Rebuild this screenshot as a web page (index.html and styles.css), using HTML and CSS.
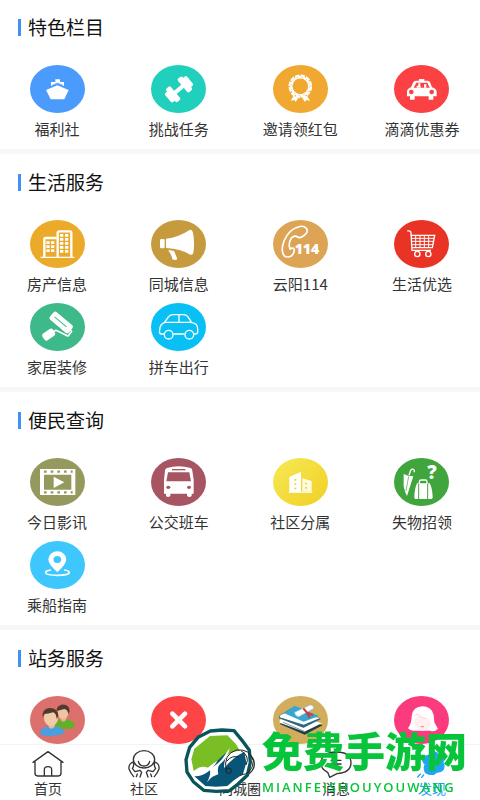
FILE: index.html
```html
<!DOCTYPE html>
<html lang="zh-CN">
<head>
    <meta charset="UTF-8">
    <title>发现</title>
    <meta name="viewport" content="width=device-width, initial-scale=1.0">
    <link rel="stylesheet" href="styles.css">
</head>
<body>
    <main class="page">
        <section class="section">
            <h2 class="section-title">特色栏目</h2>
            <div class="grid">
                <a class="item" href="#">
                    <svg class="icon" viewBox="0 0 165 144">
                        <ellipse cx="82.5" cy="72" rx="82.5" ry="72" fill="#4a9bfb"/>
                        <path fill="#fff" d="M48 75 82 61 116 75 103 103H62zM63 63V51H76V43H90V51H102V63L82 55z"/>
                        <path d="M66 61 82 54 99 61" fill="none" stroke="#4a9bfb" stroke-width="2"/>
                    </svg>
                    <span>福利社</span>
                </a>
                <a class="item" href="#">
                    <svg class="icon" viewBox="0 0 165 144">
                        <ellipse cx="82.5" cy="72" rx="82.5" ry="72" fill="#20d0bd"/>
                        <g fill="#fff" transform="translate(84 73) rotate(-40)">
                            <rect x="-22" y="-6" width="44" height="12"/>
                            <rect x="-32" y="-26" width="18" height="52" rx="5"/>
                            <rect x="-43" y="-18" width="18" height="36" rx="5"/>
                            <rect x="14" y="-26" width="18" height="52" rx="5"/>
                            <rect x="25" y="-18" width="18" height="36" rx="5"/>
                        </g>
                    </svg>
                    <span>挑战任务</span>
                </a>
                <a class="item" href="#">
                    <svg class="icon" viewBox="0 0 165 144">
                        <ellipse cx="82.5" cy="72" rx="82.5" ry="72" fill="#f0a830"/>
                        <circle cx="82" cy="64" r="27" fill="none" stroke="#fff" stroke-width="7"/>
                        <circle cx="82" cy="64" r="31" fill="none" stroke="#fff" stroke-width="9" stroke-dasharray="13 3.2"/>
                        <circle cx="82" cy="64" r="28" fill="none" stroke="#f0a830" stroke-width="2" stroke-dasharray="4 11"/>
                        <path fill="#fff" d="M62 92 76 99 68 111 64 105 53 107zM102 92 88 99 96 111 100 105 111 107z"/>
                    </svg>
                    <span>邀请领红包</span>
                </a>
                <a class="item" href="#">
                    <svg class="icon" viewBox="0 0 165 144">
                        <ellipse cx="82.5" cy="72" rx="82.5" ry="72" fill="#fb4143"/>
                        <path fill="#fff" fill-rule="evenodd" d="M75 42H91V47H101Q106 47 108 52L114 67Q127 71 128 80V94H118V104H104V94H62V104H48V94H39V79Q40 71 51 67L58 52Q60 47 66 47H75zM67 53 59 68H107L100 53z"/>
                        <path fill="#fff" d="M73 55H79V68H73zM68 62H80V68H68zM90 58H97V68H90z"/>
                        <circle cx="52" cy="81" r="7" fill="#fb4143"/><circle cx="113" cy="81" r="7" fill="#fb4143"/>
                    </svg>
                    <span>滴滴优惠券</span>
                </a>
            </div>
        </section>

        <section class="section">
            <h2 class="section-title">生活服务</h2>
            <div class="grid">
                <a class="item" href="#">
                    <svg class="icon" viewBox="0 0 165 144">
                        <ellipse cx="82.5" cy="72" rx="82.5" ry="72" fill="#ecaa2a"/>
                        <path fill="none" stroke="#fff" stroke-width="7" d="M43 112V57Q43 54 46 54H79M83 112V39Q83 34 88 34H119Q124 34 124 39V112"/>
                        <path fill="none" stroke="#fff" stroke-width="4" d="M32 112H133"/>
                        <path fill="none" stroke="#fff" stroke-width="10" stroke-dasharray="8 4" d="M54 64V100M68 64V100M95 42V101M110 42V101"/>
                    </svg>
                    <span>房产信息</span>
                </a>
                <a class="item" href="#">
                    <svg class="icon" viewBox="0 0 165 144">
                        <ellipse cx="82.5" cy="72" rx="82.5" ry="72" fill="#c69b3d"/>
                        <rect x="27" y="57" width="14" height="28" rx="4" fill="#fff"/>
                        <path fill="#fff" d="M45 56Q82 52 117 29Q124 28 126 38Q132 69 127 99Q125 106 118 104Q88 86 45 84zM53 90 69 93 78 114Q80 121 71 120L64 118Q62 104 53 93z"/>
                    </svg>
                    <span>同城信息</span>
                </a>
                <a class="item" href="#">
                    <svg class="icon" viewBox="0 0 165 144">
                        <ellipse cx="82.5" cy="72" rx="82.5" ry="72" fill="#dea455"/>
                        <path fill="none" stroke="#fff" stroke-width="5" stroke-linejoin="round" d="M75 21Q47 29 33 63Q22 94 34 108Q44 114 55 108Q65 99 64 88Q61 81 51 87Q45 70 55 54Q64 45 74 51Q82 57 97 43Q107 34 100 25Q91 15 75 21z"/>
                        <text class="icon-number" x="65" y="101">114</text>
                    </svg>
                    <span>云阳114</span>
                </a>
                <a class="item" href="#">
                    <svg class="icon" viewBox="0 0 165 144">
                        <ellipse cx="82.5" cy="72" rx="82.5" ry="72" fill="#e93425"/>
                        <g fill="none" stroke="#fff" stroke-width="4">
                            <path d="M40 33Q50 31 51 39L54 91H111M51 46H122L115 83H54"/>
                            <path stroke-width="3" d="M53 55H120M53 64H118M54 74H117M65 47V83M78 47V83M91 47V83M104 47V83"/>
                            <circle cx="70" cy="102" r="8"/><circle cx="103" cy="102" r="8"/>
                        </g>
                    </svg>
                    <span>生活优选</span>
                </a>
                <a class="item" href="#">
                    <svg class="icon" viewBox="0 0 165 144">
                        <ellipse cx="82.5" cy="72" rx="82.5" ry="72" fill="#3eb98a"/>
                        <g transform="rotate(40 92 57)">
                            <rect x="57" y="42" width="74" height="30" rx="7" fill="#fff"/>
                            <path d="M68 57H115" stroke="#3eb98a" stroke-width="3"/>
                        </g>
                        <path fill="none" stroke="#fff" stroke-width="5" stroke-linejoin="round" d="M116 96 122 89Q129 84 119 80M118 94Q115 102 107 96L78 82 68 87"/>
                        <rect x="-19" y="-12" width="38" height="24" rx="7" fill="#fff" transform="translate(56 95) rotate(-34)"/>
                    </svg>
                    <span>家居装修</span>
                </a>
                <a class="item" href="#">
                    <svg class="icon" viewBox="0 0 165 144">
                        <ellipse cx="82.5" cy="72" rx="82.5" ry="72" fill="#08c0f3"/>
                        <g fill="none" stroke="#fff" stroke-width="4" stroke-linejoin="round">
                            <path d="M40 93H30Q24 92 26 80Q27 64 40 59L52 42Q56 36 65 35H97Q107 35 112 43L122 59Q140 61 140 78V88Q139 93 132 93H129M67 93H101M42 58H120M84 36V58"/>
                            <circle cx="53" cy="95" r="13"/><circle cx="115" cy="95" r="13"/>
                        </g>
                    </svg>
                    <span>拼车出行</span>
                </a>
            </div>
        </section>

        <section class="section">
            <h2 class="section-title">便民查询</h2>
            <div class="grid">
                <a class="item" href="#">
                    <svg class="icon" viewBox="0 0 165 144">
                        <ellipse cx="82.5" cy="72" rx="82.5" ry="72" fill="#96995e"/>
                        <path fill="#fff" fill-rule="evenodd" d="M30 33H136V111H30zM42 50V95H124V50z"/>
                        <path stroke="#96995e" stroke-width="7" stroke-dasharray="8 12" d="M42 41H128M42 103H128"/>
                        <path fill="#fff" d="M71 56 103 73 71 90z"/>
                    </svg>
                    <span>今日影讯</span>
                </a>
                <a class="item" href="#">
                    <svg class="icon" viewBox="0 0 165 144">
                        <ellipse cx="82.5" cy="72" rx="82.5" ry="72" fill="#a75563"/>
                        <path fill="#fff" d="M48 30Q82 20 119 30Q124 32 124 38L128 65V107H122V114Q115 120 108 114V107H58V114Q51 120 45 114V107H39V65L42 38Q42 32 48 30z"/>
                        <path fill="#a75563" d="M51 43H115L120 70H46z"/>
                        <path d="M63 35H103" stroke="#a75563" stroke-width="4"/>
                        <ellipse cx="52" cy="88" rx="6" ry="5" fill="#a75563"/><ellipse cx="114" cy="88" rx="6" ry="5" fill="#a75563"/>
                    </svg>
                    <span>公交班车</span>
                </a>
                <a class="item" href="#">
                    <svg class="icon" viewBox="0 0 165 144">
                        <defs>
                            <linearGradient id="gold" x1="0" y1="0" x2="1" y2="1">
                                <stop offset="0" stop-color="#f6e955"/>
                                <stop offset="1" stop-color="#f1cf24"/>
                            </linearGradient>
                        </defs>
                        <ellipse cx="82.5" cy="72" rx="82.5" ry="72" fill="url(#gold)"/>
                        <path fill="#fff" d="M49 57 84 42V101H118V104H47V101H49z"/>
                        <path fill="#fffbe0" d="M88 61 116 69V101H88z"/>
                        <path stroke="#efd737" stroke-width="6" stroke-dasharray="5 8" d="M67 63V99M99 74V99"/>
                    </svg>
                    <span>社区分属</span>
                </a>
                <a class="item" href="#">
                    <svg class="icon" viewBox="0 0 165 144">
                        <ellipse cx="82.5" cy="72" rx="82.5" ry="72" fill="#40a53d"/>
                        <path fill="#fff" d="M29 48 42 53 58 55 39 114Q34 106 29 85z"/>
                        <path fill="none" stroke="#fff" stroke-width="4" d="M45 52 50 37Q55 30 61 37V43"/>
                        <path fill="none" stroke="#40a53d" stroke-width="2" d="M44 55 36 99"/>
                        <path fill="#fff" d="M69 76H107Q115 90 116 117Q117 123 109 123H67Q60 123 61 116Q62 91 69 76z"/>
                        <path fill="none" stroke="#fff" stroke-width="4" d="M76 77V70Q77 66 82 66H94Q99 66 99 71V77"/>
                        <path stroke="#40a53d" stroke-width="3" d="M74 77V123M101 77V123"/>
                        <text class="icon-question" x="100" y="62">?</text>
                    </svg>
                    <span>失物招领</span>
                </a>
                <a class="item" href="#">
                    <svg class="icon" viewBox="0 0 165 144">
                        <ellipse cx="82.5" cy="72" rx="82.5" ry="72" fill="#3ec7fd"/>
                        <path fill="#fff" fill-rule="evenodd" d="M82 94Q55 70 55 55A27 24 0 0 1 109 55Q109 70 82 94zM82 45A11 10 0 1 0 82 66A11 10 0 1 0 82 45z"/>
                        <path fill="none" stroke="#fff" stroke-width="5" d="M63 87Q46 89 47 95Q49 103 82 103T118 95Q118 89 102 87"/>
                    </svg>
                    <span>乘船指南</span>
                </a>
            </div>
        </section>

        <section class="section">
            <h2 class="section-title">站务服务</h2>
            <div class="grid">
                <a class="item" href="#">
                    <svg class="icon" viewBox="0 0 165 144">
                        <ellipse cx="82.5" cy="72" rx="82.5" ry="72" fill="#dc706c"/>
                        <path fill="#63af28" d="M74 91Q78 73 94 71L110 70Q133 73 135 92Q118 103 85 96z"/>
                        <path fill="#e2b18d" d="M90 56H109V71Q100 82 92 73z"/>
                        <ellipse cx="99" cy="50" rx="16" ry="19" fill="#edc5a0"/>
                        <path fill="#513b30" d="M80 45Q79 30 94 26Q118 23 119 46L115 54Q113 40 103 39Q92 42 80 45z"/>
                        <path fill="#4b9edf" d="M29 113Q33 94 50 92L72 90Q103 95 104 112Q72 125 36 118z"/>
                        <path fill="#e9bb99" d="M55 76H74V92Q64 104 56 93z"/>
                        <ellipse cx="63" cy="66" rx="21" ry="24" fill="#f2cba8"/>
                        <path fill="#513b30" d="M38 65Q35 39 57 36Q83 34 85 60L80 69Q79 53 70 49Q53 54 43 54z"/>
                    </svg>
                </a>
                <a class="item" href="#">
                    <svg class="icon" viewBox="0 0 165 144">
                        <ellipse cx="82.5" cy="72" rx="82.5" ry="72" fill="#fd4547"/>
                        <path d="M64 53 102 91M102 53 64 91" stroke="#fff" stroke-width="14" stroke-linecap="round"/>
                    </svg>
                </a>
                <a class="item" href="#">
                    <svg class="icon" viewBox="0 0 165 144">
                        <ellipse cx="82.5" cy="72" rx="82.5" ry="72" fill="#d2ad5d"/>
                        <path fill="#263d43" d="M22 76 53 54 149 88 95 116 22 85z"/>
                        <path fill="#fff" d="M20 72 52 52 146 82 94 107 20 80z"/>
                        <path fill="#276782" d="M18 59 52 38 144 69 92 95 18 67z"/>
                        <path fill="#fff" d="M20 59 51 42 139 67 92 86 20 64z"/>
                        <path fill="#37a7cf" d="M32 51 65 29 138 60 92 77z"/>
                        <path fill="#fff" stroke="#8fc8dd" stroke-width="2" d="M65 49 111 27Q123 27 121 38L77 62Q65 61 65 49z"/>
                        <path fill="none" stroke="#ce3841" stroke-width="6" d="M91 37 101 49 110 65M101 49 120 58"/>
                        <path d="M28 68 91 94M30 79 94 106" stroke="#3d6170" stroke-width="2"/>
                    </svg>
                </a>
                <a class="item" href="#">
                    <svg class="icon" viewBox="0 0 165 144">
                        <ellipse cx="82.5" cy="72" rx="82.5" ry="72" fill="#fb3b7e"/>
                        <path fill="#fff" d="M42 97Q53 82 53 61Q54 34 84 31Q113 31 119 57L121 79Q126 89 132 98Q122 109 109 104H59Q50 105 42 97z"/>
                        <path fill="#fff0ef" d="M62 57Q75 65 104 62L111 84Q104 104 84 104Q66 101 62 82z"/>
                        <path fill="#fff" d="M55 60Q63 36 86 38Q105 43 113 70Q86 71 73 56Q69 65 58 69z"/>
                        <path d="M62 60Q66 53 72 56 82 66 98 68" fill="none" stroke="#f4b9bd" stroke-width="2"/>
                        <path d="M81 92H89" stroke="#ed7f94" stroke-width="3" stroke-linecap="round"/>
                    </svg>
                </a>
            </div>
        </section>
    </main>

    <nav class="tabbar">
        <a class="tab" href="#">
            <svg class="tab-icon" viewBox="0 0 96 84">
                <path d="M3 37 48 5 93 37M9 32V70Q9 78 17 78H79Q87 78 87 70V32M37 78V59Q37 50 48 50T59 59V78"/>
            </svg>
            <span>首页</span>
        </a>
        <a class="tab" href="#">
            <svg class="tab-icon" viewBox="0 0 96 84">
                <ellipse cx="48" cy="28" rx="32" ry="26"/>
                <path d="M31 34Q34 48 48 48T65 34M15 36Q1 42 3 57Q8 70 17 80M15 36Q20 46 13 55L21 65 36 61 41 67 36 81M25 80 28 72M81 36Q95 42 93 57Q88 70 79 80M81 36Q76 46 83 55L75 65 60 61 55 67 60 81M71 80 68 72"/>
            </svg>
            <span>社区</span>
        </a>
        <a class="tab" href="#">
            <svg class="tab-icon" viewBox="0 0 96 84">
                <ellipse cx="48" cy="42" rx="43" ry="37"/>
                <ellipse cx="48" cy="42" rx="18" ry="16"/>
            </svg>
            <span>同城圈</span>
        </a>
        <a class="tab" href="#">
            <svg class="tab-icon" viewBox="0 0 96 84">
                <path d="M29 82 23 67Q3 58 3 40Q3 7 48 6T93 40Q91 68 51 71zM33 31H63M33 42H63M38 53H58"/>
            </svg>
            <span>消息</span>
        </a>
        <a class="tab active" href="#">
            <svg class="tab-icon" viewBox="0 0 96 84">
                <path class="filled" d="M21 17Q39 23 48 5 64 6 66 14 84 5 88 23 76 33 84 47 84 67 62 66 50 80 28 67 22 54 28 43 15 30 21 17z"/>
                <path d="M5 81 13 72M17 82 23 75"/>
            </svg>
            <span>发现</span>
        </a>
    </nav>

    <div class="watermark">
        <svg class="watermark-logo" viewBox="0 0 210 198">
            <path fill="#fff" stroke="#07545a" stroke-width="10" stroke-linejoin="round" d="M79 9 114 6 150 8 174 37 196 67 199 103 190 142 162 168 137 188 97 190 59 187 28 161 9 132 6 95 17 58 42 28z"/>
            <path fill="#7abe25" d="M78 24 130 22 155 47 168 69Q140 67 116 93Q91 101 72 119Q51 110 29 129L22 94 31 62z"/>
            <path fill="#075577" d="M31 145Q71 147 102 97Q137 60 127 83Q118 109 121 120Q150 85 181 72L187 104 177 138 148 158 130 174 96 176 64 174z"/>
            <path fill="#fff" d="M75 123Q107 108 122 82L137 60Q133 87 108 109Q98 119 103 139Q83 144 69 163Q85 132 75 123z"/>
            <g fill="none" stroke="#222" stroke-width="3">
                <path d="M127 128Q116 78 158 66Q198 62 208 98Q207 137 168 142M171 68Q199 85 186 111M128 100Q143 81 164 87"/>
                <ellipse cx="134" cy="128" rx="8" ry="8"/>
            </g>
        </svg>
        <div class="watermark-text">
            <strong>免费手游网</strong>
            <span>MIANFEISHOUYOUWANG</span>
        </div>
    </div>
</body>
</html>
```
FILE: styles.css
```css
:root {
    --blue: #3f91f7;
    --text: #333;
    --line: #f7f7f7;
    --green: #08c43b;
}
* {
    box-sizing: border-box;
}
body {
    margin: 0;
    background: #fff;
    color: var(--text);
    font-family: "Noto Sans CJK SC", sans-serif;
}
a {
    color: inherit;
    text-decoration: none;
}
.page {
    padding-bottom: 56px;
}
.section {
    padding: 18px 19px 10px 18px;
    border-bottom: 5px solid var(--line);
}
.section:first-child {
    padding-top: 17px;
}
.section:last-child {
    padding-bottom: 0;
    border-bottom: 0;
}
.section-title {
    display: flex;
    align-items: center;
    gap: 7px;
    margin: 0 0 28px;
    color: #111;
    font-size: 19px;
    font-weight: 400;
    line-height: 20px;
}
.section-title::before {
    content: "";
    width: 3px;
    height: 17px;
    background: var(--blue);
}
.grid {
    display: grid;
    grid-template-columns: repeat(4, 78px);
    justify-content: space-between;
    row-gap: 9px;
}
.item {
    display: flex;
    flex-direction: column;
    align-items: center;
    gap: 6px;
    font-size: 15px;
    line-height: 20px;
    white-space: nowrap;
}
.icon {
    width: 55px;
    height: 48px;
}
.icon-number {
    fill: #fff;
    font: 900 42px "Noto Sans", sans-serif;
}
.icon-question {
    fill: #fff;
    font: 900 56px "Open Sans", sans-serif;
}

/* bottom navigation */
.tabbar {
    position: fixed;
    left: 0;
    right: 0;
    bottom: 0;
    display: flex;
    height: 56px;
    padding-top: 5px;
    border-top: 1px solid #f3f3f3;
    background: #fff;
}
.tab {
    flex: 1;
    display: flex;
    flex-direction: column;
    align-items: center;
    font-size: 14px;
    line-height: 20px;
}
.tab-icon {
    width: 32px;
    height: 28px;
    fill: none;
    stroke: #333;
    stroke-width: 4;
    stroke-linecap: round;
    stroke-linejoin: round;
}
.tab.active {
    color: #20a5f5;
}
.tab.active .tab-icon {
    stroke: #20a5f5;
}
.filled {
    fill: #20a5f5;
}

/* site mark over the page */
.watermark {
    position: fixed;
    right: 13px;
    bottom: 5px;
    display: flex;
    align-items: center;
    gap: 8px;
    color: var(--green);
    pointer-events: none;
}
.watermark-logo {
    width: 70px;
    height: 66px;
}
.watermark-text {
    display: flex;
    flex-direction: column;
    gap: 8px;
}
.watermark-text strong {
    font-size: 41px;
    font-weight: 900;
    line-height: 44px;
}
.watermark-text span {
    font: 600 13px/16px "Open Sans", sans-serif;
    letter-spacing: 2px;
}
```
